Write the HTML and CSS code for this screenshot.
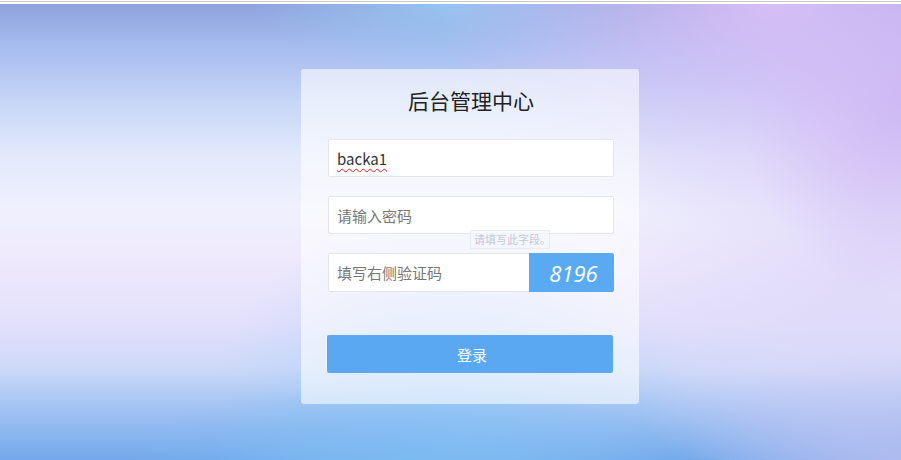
FILE: index.html
```
<!DOCTYPE html>
<html lang="zh-CN">
<head>
    <meta charset="UTF-8">
    <meta name="viewport" content="width=device-width, initial-scale=1.0">
    <title>后台管理中心</title>
    <link rel="stylesheet" href="styles.css">
</head>
<body>
    <div class="top-line"></div>
    <div class="page">
        <form class="login-box">
            <h1 class="login-title">后台管理中心</h1>
            <div class="field">
                <span class="field-value">backa1</span>
            </div>
            <div class="field field-pass">
                <span class="field-hint">请输入密码</span>
                <div class="tip">请填写此字段。</div>
            </div>
            <div class="field field-code">
                <span class="field-hint">填写右侧验证码</span>
                <div class="code">8196</div>
            </div>
            <button type="button" class="login-btn">登录</button>
        </form>
    </div>
</body>
</html>
```

FILE: styles.css
```
html, body {
    margin: 0;
    height: 100%;
}
body {
    font-family: "Noto Sans CJK SC", "Noto Sans", sans-serif;
    background: #fff;
    overflow: hidden;
}
.top-line {
    height: 1px;
    background: #c9c9c9;
    border-top: 1px solid #fff;
    border-bottom: 2px solid #fff;
}
/* blurred photo background, built from soft colour blobs */
.page {
    height: 456px;
    background:
        radial-gradient(ellipse 340px 230px at 86% 0%, rgba(218, 192, 247, 0.95), rgba(218, 192, 247, 0) 100%),
        radial-gradient(ellipse 160px 200px at 100% 20%, rgba(200, 176, 242, 0.9), rgba(200, 176, 242, 0) 100%),
        radial-gradient(ellipse 200px 70px at 50% 0%, rgba(152, 198, 242, 0.9), rgba(152, 198, 242, 0) 100%),
        radial-gradient(ellipse 260px 240px at 95% 62%, rgba(222, 216, 249, 0.8), rgba(222, 216, 249, 0) 100%),
        radial-gradient(ellipse 280px 80px at 45% 100%, rgba(122, 186, 242, 0.8), rgba(122, 186, 242, 0) 100%),
        radial-gradient(ellipse 240px 220px at 50% 92%, rgba(150, 204, 248, 0.55), rgba(150, 204, 248, 0) 100%),
        radial-gradient(ellipse 220px 110px at 100% 100%, rgba(164, 180, 236, 0.95), rgba(164, 180, 236, 0) 100%),
        linear-gradient(to bottom, #8ea3da 0%, #a8bdf0 10%, #c8d7f7 22%, #e2e9fb 33%, #eff0fd 45%, #efeafc 55%, #e3e0fb 70%, #cdd9f8 80%, #a6c4f3 88%, #72a9ea 100%);
    display: flex;
    flex-direction: column;
}
.login-box {
    width: 338px;
    box-sizing: border-box;
    margin: 65px 0 0 301px;
    padding: 16px 25px 31px 27px;
    background: rgba(255, 255, 255, 0.58);
    border-radius: 3px;
}
.login-title {
    margin: 0 0 24px;
    font-size: 21px;
    line-height: 30px;
    font-weight: normal;
    color: #222;
    text-align: center;
}
.field {
    height: 38px;
    box-sizing: border-box;
    background: #fff;
    border: 1px solid #e3e6ea;
    border-radius: 2px;
    display: flex;
    align-items: center;
    padding-left: 8px;
    font-size: 15px;
    margin-bottom: 19px;
    position: relative;
}
.field-value {
    color: #333;
    text-decoration: underline wavy #e02020;
    text-decoration-thickness: 1px;
    text-underline-offset: 3px;
}
.field-hint {
    color: #777;
}
.field-code {
    height: 39px;
    margin-bottom: 43px;
    padding-right: 0;
}
.code {
    margin-left: auto;
    width: 85px;
    box-sizing: border-box;
    align-self: stretch;
    margin-top: -1px;
    margin-bottom: -1px;
    margin-right: -1px;
    padding-left: 4px;
    background: #5aaaf2;
    color: #fff;
    font-family: "Open Sans", sans-serif;
    font-style: italic;
    font-size: 22px;
    display: flex;
    align-items: center;
    justify-content: center;
    border-radius: 0 2px 2px 0;
}
.tip {
    position: absolute;
    left: 141px;
    top: 33px;
    width: 80px;
    height: 19px;
    box-sizing: border-box;
    border: 1px solid #e8ebf1;
    background: rgba(245, 247, 252, 0.7);
    color: #c2c9d6;
    font-size: 11px;
    line-height: 17px;
    padding-left: 3px;
    white-space: nowrap;
    overflow: hidden;
}
.login-btn {
    display: block;
    width: 286px;
    height: 38px;
    border: none;
    border-radius: 2px;
    background: #5aa8f2;
    color: #fff;
    font-family: inherit;
    font-size: 15px;
    padding-left: 10px;
    cursor: pointer;
    margin-left: -1px;
}
```
